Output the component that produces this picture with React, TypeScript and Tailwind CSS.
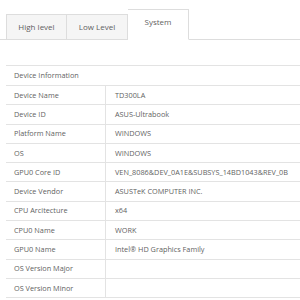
const rows: [string, string][] = [
  ['Device Name', 'TD300LA'],
  ['Device ID', 'ASUS-Ultrabook'],
  ['Platform Name', 'WINDOWS'],
  ['OS', 'WINDOWS'],
  ['GPU0 Core ID', 'VEN_8086&DEV_0A1E&SUBSYS_14BD1043&REV_0B'],
  ['Device Vendor', 'ASUSTeK COMPUTER INC.'],
  ['CPU Arcitecture', 'x64'],
  ['CPU0 Name', 'WORK'],
  ['GPU0 Name', 'Intel® HD Graphics Family'],
  ['OS Version Major', ''],
  ['OS Version Minor', ''],
];

export default function App() {
  return (
    <div className="w-[300px] h-[300px] overflow-hidden bg-white text-[#5f5f5f] font-['Open_Sans',sans-serif]">
      {/* tabs */}
      <div className="flex items-end pt-[9px] pl-[6px] border-b border-[#ddd]">
        <div className="-mb-px w-[61px] h-[26px] flex items-center justify-center border border-[#ddd] bg-[#f5f5f5] text-[8px]">
          High level
        </div>
        <div className="-mb-px w-[61px] h-[26px] flex items-center justify-center border border-l-0 border-[#ddd] bg-[#f5f5f5] text-[8px]">
          Low Level
        </div>
        <div className="-mb-px w-[61px] h-[31px] flex items-center justify-center pb-[5px] border border-l-0 border-[#ddd] border-b-white bg-white text-[8px]">
          System
        </div>
      </div>

      {/* table */}
      <div className="mt-[25px] ml-[6px] border-t border-[#e3e3e3] text-[7.3px]">
        <div className="h-[20px] flex items-center pl-[8px] border-b border-[#e3e3e3]">
          Device Information
        </div>
        {rows.map(([label, value]) => (
          <div key={label} className="h-[19.3px] flex border-b border-[#e3e3e3]">
            <div className="w-[100px] flex items-center pl-[8px] border-r border-[#e3e3e3]">{label}</div>
            <div className="flex-1 flex items-center pl-[9px] whitespace-nowrap">{value}</div>
          </div>
        ))}
      </div>
    </div>
  );
}
